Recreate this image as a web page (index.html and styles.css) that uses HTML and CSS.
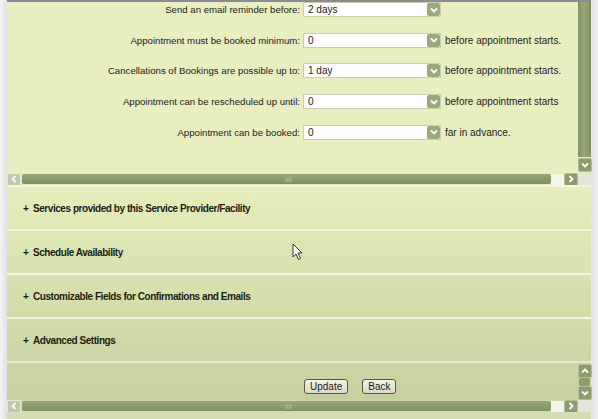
FILE: index.html
```
<!DOCTYPE html>
<html lang="en">
<head>
    <meta charset="UTF-8">
    <title>Service Provider Settings</title>
    <link rel="stylesheet" href="styles.css">
</head>
<body>
    <div class="page">
        <div class="frame">
            <!-- booking rules pane -->
            <div class="pane">
                <div class="pane-body">
                    <div class="rules">
                        <div class="rule">
                            <label class="rule-label">Send an email reminder before:</label>
                            <div class="select"><span class="select-value">2 days</span><span class="drop"><svg viewBox="0 0 10 10"><path d="M2 3.5 L5 6.5 L8 3.5" /></svg></span></div>
                            <span class="rule-note"></span>
                        </div>
                        <div class="rule">
                            <label class="rule-label">Appointment must be booked minimum:</label>
                            <div class="select"><span class="select-value">0</span><span class="drop"><svg viewBox="0 0 10 10"><path d="M2 3.5 L5 6.5 L8 3.5" /></svg></span></div>
                            <span class="rule-note">before appointment starts.</span>
                        </div>
                        <div class="rule">
                            <label class="rule-label">Cancellations of Bookings are possible up to:</label>
                            <div class="select"><span class="select-value">1 day</span><span class="drop"><svg viewBox="0 0 10 10"><path d="M2 3.5 L5 6.5 L8 3.5" /></svg></span></div>
                            <span class="rule-note">before appointment starts.</span>
                        </div>
                        <div class="rule">
                            <label class="rule-label">Appointment can be rescheduled up until:</label>
                            <div class="select"><span class="select-value">0</span><span class="drop"><svg viewBox="0 0 10 10"><path d="M2 3.5 L5 6.5 L8 3.5" /></svg></span></div>
                            <span class="rule-note">before appointment starts</span>
                        </div>
                        <div class="rule">
                            <label class="rule-label">Appointment can be booked:</label>
                            <div class="select"><span class="select-value">0</span><span class="drop"><svg viewBox="0 0 10 10"><path d="M2 3.5 L5 6.5 L8 3.5" /></svg></span></div>
                            <span class="rule-note">far in advance.</span>
                        </div>
                    </div>
                    <div class="vscroll">
                        <div class="vtrack"></div>
                        <span class="sbtn"><svg viewBox="0 0 10 10"><path d="M2 3.5 L5 6.5 L8 3.5" /></svg></span>
                    </div>
                </div>
                <div class="hscroll">
                    <span class="sbtn light"><svg viewBox="0 0 10 10"><path d="M6.5 2 L3.5 5 L6.5 8" /></svg></span>
                    <div class="htrack"><span class="grip"></span></div>
                    <span class="hgap"></span>
                    <span class="sbtn"><svg viewBox="0 0 10 10"><path d="M3.5 2 L6.5 5 L3.5 8" /></svg></span>
                    <span class="corner"></span>
                </div>
            </div>

            <div class="lower">
                <div class="section"><span class="plus">+</span>Services provided by this Service Provider/Facility</div>
                <div class="section"><span class="plus">+</span>Schedule Availability</div>
                <div class="section"><span class="plus">+</span>Customizable Fields for Confirmations and Emails</div>
                <div class="section"><span class="plus">+</span>Advanced Settings</div>
                <div class="actions">
                    <div class="buttons">
                        <button class="btn">Update</button>
                        <button class="btn">Back</button>
                    </div>
                    <div class="mini-vscroll">
                        <span class="sbtn"><svg viewBox="0 0 10 10"><path d="M2 6.5 L5 3.5 L8 6.5" /></svg></span>
                        <span class="mini-thumb"></span>
                        <span class="sbtn"><svg viewBox="0 0 10 10"><path d="M2 3.5 L5 6.5 L8 3.5" /></svg></span>
                    </div>
                </div>
            </div>

            <div class="hscroll bottom">
                <span class="sbtn light"><svg viewBox="0 0 10 10"><path d="M6.5 2 L3.5 5 L6.5 8" /></svg></span>
                <div class="htrack"><span class="grip"></span></div>
                <span class="hgap"></span>
                <span class="sbtn"><svg viewBox="0 0 10 10"><path d="M3.5 2 L6.5 5 L3.5 8" /></svg></span>
                <span class="corner"></span>
            </div>
            <div class="foot"></div>
        </div>

        <!-- mouse pointer -->
        <svg class="cursor" viewBox="0 0 12 18"><path d="M1 1 L1 14 L4 11 L6.5 16.5 L8.5 15.5 L6 10 L10 10 Z" /></svg>
    </div>
</body>
</html>
```

FILE: styles.css
```
body {
    margin: 0;
    font-family: "Liberation Sans", Arial, sans-serif;
    background-color: #ededed;
}

.page {
    position: relative;
    width: 598px;
    height: 419px;
    overflow: hidden;
    background: linear-gradient(to right, #f4f4f4, #e4e4e4 6px, #e4e4e4 590px, #eeeeee);
}

.frame {
    margin-left: 7px;
    width: 584px;
    border-top: 2px solid #8c8c8c;
    display: flex;
    flex-direction: column;
}

/* upper pane */

.pane-body {
    display: flex;
    height: 171px;
    background-color: #e8eec0;
}

.rules {
    flex: 1;
    display: flex;
    flex-direction: column;
    gap: 15.7px;
}

.rule {
    display: flex;
    align-items: center;
    height: 15px;
    font-size: 9.65px;
    color: #222;
}

.rule-label {
    width: 296px;
    text-align: right;
    padding-right: 3px;
    box-sizing: border-box;
}

.select {
    display: flex;
    width: 138px;
    height: 15px;
    box-sizing: border-box;
    border: 1px solid #c9cfae;
    background-color: #fff;
    font-size: 10px;
}

.select-value {
    flex: 1;
    padding-left: 4px;
    line-height: 13px;
}

.drop {
    width: 13px;
    height: 13px;
    background-color: #9aa97c;
    border-radius: 2px;
    display: flex;
    align-items: center;
    justify-content: center;
}

.drop svg,
.sbtn svg {
    width: 10px;
    height: 10px;
    fill: none;
    stroke: #fff;
    stroke-width: 1.8;
}

.rule-note {
    padding-left: 4px;
    font-size: 10px;
}

.vscroll {
    width: 13px;
    display: flex;
    flex-direction: column;
    gap: 1px;
    padding-bottom: 1px;
}

.vtrack {
    flex: 1;
    background: linear-gradient(to right, #7f9262, #97a878, #7f9262);
}

.sbtn {
    width: 12px;
    height: 12px;
    background-color: #8c9c6e;
    border: 1px solid #b4bf95;
    border-radius: 2px;
    display: flex;
    align-items: center;
    justify-content: center;
    flex-shrink: 0;
}

.sbtn.light {
    background-color: #c0c9a8;
    border-color: #e6ead6;
}

.hscroll {
    display: flex;
    align-items: center;
    height: 12px;
    background-color: #e2e8c0;
}

.hscroll .sbtn {
    height: 11px;
}

.htrack {
    flex: 1;
    height: 10px;
    margin-left: 1px;
    border-radius: 2px;
    background: linear-gradient(to bottom, #97a878, #7e9160);
    display: flex;
    align-items: center;
    justify-content: center;
}

.grip {
    width: 7px;
    height: 5px;
    background-color: #9dae80;
    margin-left: 4px;
}

.hgap {
    width: 13px;
    height: 11px;
    background-color: #f3f5ea;
}

.corner {
    width: 13px;
    height: 12px;
    background-color: #e4e4dc;
}

/* collapsible sections */

.lower {
    background: linear-gradient(to bottom, #e7edbd, #c7d0a0);
}

.section {
    height: 42px;
    display: flex;
    align-items: center;
    padding-left: 16px;
    border-top: 2px solid #f2f5df;
    font-size: 10px;
    font-weight: bold;
    letter-spacing: -0.45px;
    color: #1c1c14;
}

.plus {
    width: 10px;
    letter-spacing: 0;
}

.actions {
    display: flex;
    height: 37px;
    border-top: 2px solid #e6ead2;
}

.buttons {
    flex: 1;
    display: flex;
    align-items: flex-start;
    gap: 14px;
    padding-left: 297px;
    padding-top: 16px;
}

.btn {
    height: 15px;
    padding: 0 5px;
    font-family: "Liberation Sans", Arial, sans-serif;
    font-size: 10px;
    color: #222;
    border: 1px solid #55554a;
    border-radius: 3px;
    background: linear-gradient(to bottom, #f3f1e2, #dddbc6);
    line-height: 12px;
}

.mini-vscroll {
    width: 13px;
    display: flex;
    flex-direction: column;
    padding-top: 1px;
}

.mini-thumb {
    height: 10px;
    margin: 0 1px;
    background-color: #8c9c6e;
    border-radius: 2px;
}

.hscroll.bottom {
    background-color: #d2daae;
}

.foot {
    height: 8px;
    background-color: #d5dcb4;
}

.cursor {
    position: absolute;
    left: 292px;
    top: 243px;
    width: 12px;
    height: 18px;
    fill: #fff;
    stroke: #333;
    stroke-width: 1;
}
```
